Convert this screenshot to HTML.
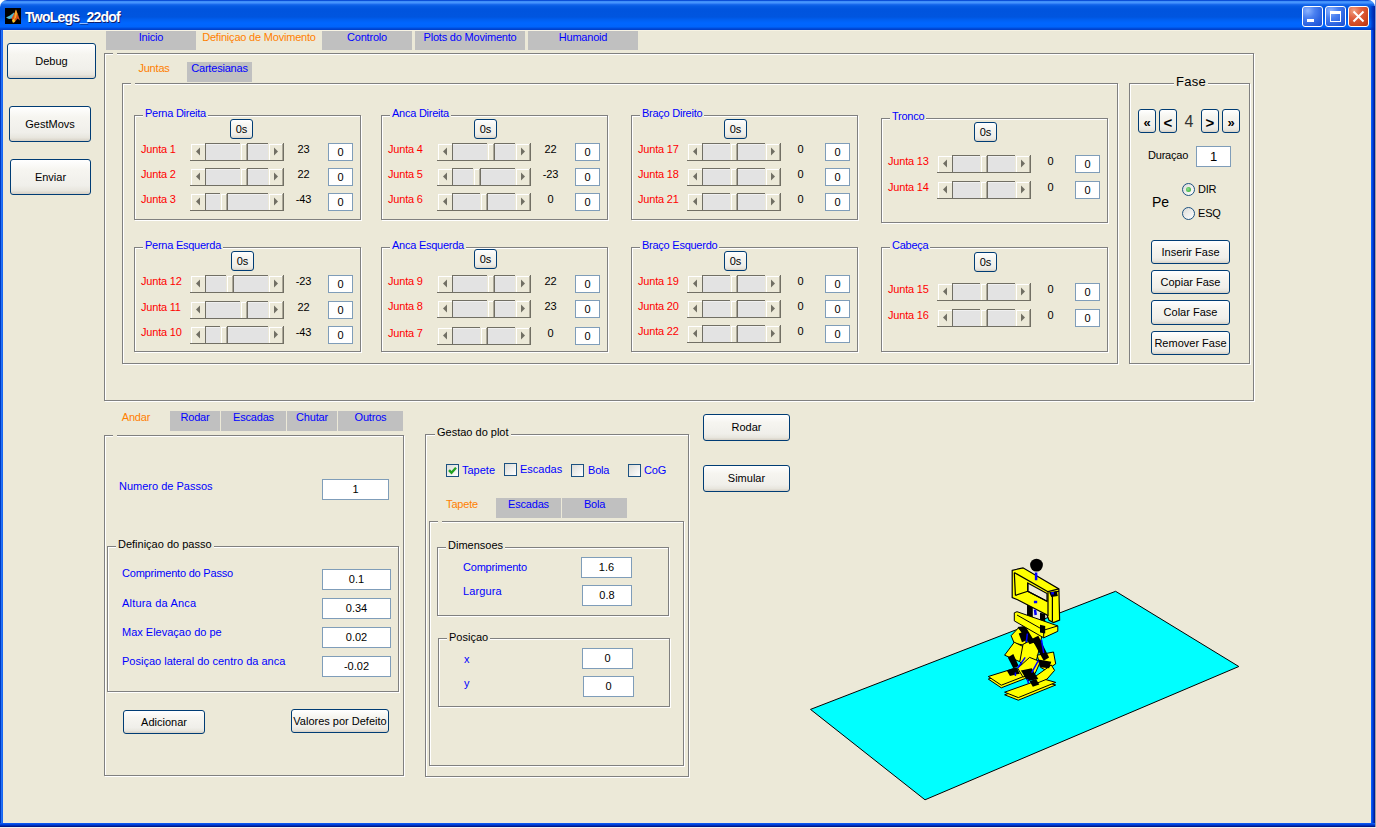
<!DOCTYPE html><html><head><meta charset="utf-8"><title>TwoLegs_22dof</title><style>
*{margin:0;padding:0}
html,body{width:1376px;height:828px;overflow:hidden;background:#fff}
body{position:relative;font-family:'Liberation Sans', sans-serif;font-size:11px}
body>div{position:absolute}
.btn{box-sizing:border-box;border:1px solid #003C74;border-radius:3px;background:linear-gradient(#FFFFFF 0%,#F6F5F0 30%,#F0EFEA 75%,#E8E6DE 90%,#D6D0C5 100%)}
.radio{width:13px;height:13px;box-sizing:border-box;border:1px solid #1C5180;border-radius:50%;background:linear-gradient(135deg,#DCDCD7,#FFFFFF)}
.radio.on::after{content:"";position:absolute;left:3px;top:3px;width:5px;height:5px;border-radius:50%;background:radial-gradient(circle at 40% 40%,#8FE08F,#21A121)}
.cb{width:13px;height:13px;box-sizing:border-box;border:1px solid #1C5180;background:linear-gradient(135deg,#DCDCD7,#FFFFFF)}
</style></head><body><div style="left:0;top:0;width:1376px;height:828px;background:#fff"></div>
<div style="left:1375px;top:0;width:1px;height:30px;background:#7A96D8"></div>
<div id="title" style="left:0;top:0;width:1375px;height:30px;border-radius:7px 7px 0 0;background:linear-gradient(#0B4FD8 0px,#0B4FD8 1px,#3D8CF7 1px,#4A98FF 3px,#1E6EF0 4px,#065CE3 6px,#0054DE 9px,#0055DF 17px,#0060F2 20px,#0066FF 23px,#0064FB 27px,#0050E0 28px,#003CC4 30px)"></div>
<div style="left:1370px;top:6px;width:5px;height:24px;background:linear-gradient(90deg,rgba(0,40,180,0) 0,rgba(0,40,180,.6) 2px,#0020A0 5px)"></div>
<div style="left:0;top:30px;width:3px;height:797px;background:linear-gradient(90deg,#0038C0 0,#0038C0 1px,#2A78F8 1px,#1060F0 3px)"></div>
<div style="left:1371px;top:30px;width:4px;height:797px;background:linear-gradient(90deg,#0A5AF8 0,#0A5AF8 1px,#0046E0 1px,#0046E0 2px,#0030C0 2px,#0030C0 3px,#001C98 3px)"></div>
<div style="left:0;top:823px;width:1375px;height:4px;background:linear-gradient(#0A55F0 0,#0A55F0 1px,#0044DC 1px,#0044DC 2px,#002EB8 2px,#002EB8 3px,#001888 3px)"></div>
<div style="left:1375px;top:30px;width:1px;height:798px;background:#A0A0A0"></div>
<div style="left:0;top:827px;width:1376px;height:1px;background:#F0F0F0"></div>
<div style="left:3px;top:30px;width:1368px;height:793px;background:#ECE9D8"></div>
<div style="left:3px;top:30px;width:1368px;height:1px;background:#F7F3E3"></div>
<svg style="position:absolute;left:5px;top:8px" width="16" height="16" viewBox="0 0 16 16">
<rect width="16" height="16" fill="#000"/>
<polygon points="1,9.5 5,7.5 9,4.5 10,6.5 7,10.5 4,11" fill="#4FB8D0"/>
<polygon points="6.5,10.5 10,4 11,1.5 13,6.5 15,12.5 12.5,10.5 9.5,14.5 7.5,12.5" fill="#D8501A"/>
<polygon points="10,4 11,1.5 12.2,5.5 11,9.5 9,12" fill="#F2A82A"/>
<polygon points="7,12.5 9,10.5 10,13.5 8,15" fill="#F8D030"/>
</svg>
<div style="left:26px;top:10px;font-size:14px;line-height:17px;letter-spacing:-0.75px;font-weight:bold;color:#0F1E6A;white-space:pre">TwoLegs_22dof</div>
<div style="left:25px;top:9px;font-size:14px;line-height:17px;letter-spacing:-0.75px;font-weight:bold;color:#fff;white-space:pre">TwoLegs_22dof</div>
<div style="left:1302px;top:6px;width:21px;height:21px;box-sizing:border-box;border:1px solid #fff;border-radius:3px;background:radial-gradient(circle at 25% 20%, #8CB4FF 0, #4A80F0 35%, #2A62E0 70%, #1A4ED0 100%)"></div>
<div style="left:1325px;top:6px;width:21px;height:21px;box-sizing:border-box;border:1px solid #fff;border-radius:3px;background:radial-gradient(circle at 25% 20%, #8CB4FF 0, #4A80F0 35%, #2A62E0 70%, #1A4ED0 100%)"></div>
<div style="left:1348px;top:6px;width:21px;height:21px;box-sizing:border-box;border:1px solid #fff;border-radius:3px;background:radial-gradient(circle at 25% 20%, #F0A080 0, #E06040 35%, #D04820 70%, #B83010 100%)"></div>
<div style="left:1307px;top:19px;width:7px;height:3px;background:#fff"></div>
<div style="left:1330px;top:11px;width:11px;height:11px;box-sizing:border-box;border:1px solid #fff;border-top-width:3px"></div>
<svg style="position:absolute;left:1348px;top:6px" width="21" height="21"><path d="M5.5 5.5 L15.5 15.5 M15.5 5.5 L5.5 15.5" stroke="#fff" stroke-width="2" /></svg>
<div class="btn" style="left:7px;top:43px;width:89px;height:36px"></div>
<div style="left:-48.5px;top:55px;width:200px;text-align:center;font-size:11px;line-height:13px;color:#000;white-space:pre;letter-spacing:0px;">Debug</div>
<div class="btn" style="left:9px;top:106px;width:82px;height:36px"></div>
<div style="left:-50.0px;top:118px;width:200px;text-align:center;font-size:11px;line-height:13px;color:#000;white-space:pre;letter-spacing:0px;">GestMovs</div>
<div class="btn" style="left:10px;top:159px;width:81px;height:36px"></div>
<div style="left:-49.5px;top:171px;width:200px;text-align:center;font-size:11px;line-height:13px;color:#000;white-space:pre;letter-spacing:0px;">Enviar</div>
<div style="left:106px;top:31px;width:90px;height:19px;background:#C0C0C0"></div>
<div style="left:51.0px;top:31px;width:200px;text-align:center;font-size:11px;line-height:13px;color:#0000FF;white-space:pre;letter-spacing:-0.2px;">Inicio</div>
<div style="left:159px;top:31px;width:200px;text-align:center;font-size:11px;line-height:13px;color:#FF8000;white-space:pre;letter-spacing:-0.2px;">Definiçao de Movimento</div>
<div style="left:322px;top:31px;width:90px;height:19px;background:#C0C0C0"></div>
<div style="left:267.0px;top:31px;width:200px;text-align:center;font-size:11px;line-height:13px;color:#0000FF;white-space:pre;letter-spacing:-0.2px;">Controlo</div>
<div style="left:415px;top:31px;width:110px;height:19px;background:#C0C0C0"></div>
<div style="left:370.0px;top:31px;width:200px;text-align:center;font-size:11px;line-height:13px;color:#0000FF;white-space:pre;letter-spacing:-0.2px;">Plots do Movimento</div>
<div style="left:528px;top:31px;width:110px;height:19px;background:#C0C0C0"></div>
<div style="left:483.0px;top:31px;width:200px;text-align:center;font-size:11px;line-height:13px;color:#0000FF;white-space:pre;letter-spacing:-0.2px;">Humanoid</div>
<div style="left:105px;top:54px;width:1150px;height:348px;border:1px solid #fff;box-sizing:border-box"></div>
<div style="left:104px;top:53px;width:1150px;height:348px;border:1px solid #808080;box-sizing:border-box"></div>
<div style="left:113px;top:53px;width:4px;height:2px;background:#ECE9D8"></div>
<div style="left:54px;top:62px;width:200px;text-align:center;font-size:11px;line-height:13px;color:#FF8000;white-space:pre;letter-spacing:-0.2px;">Juntas</div>
<div style="left:187px;top:62px;width:65px;height:20px;background:#C0C0C0"></div>
<div style="left:119.5px;top:62px;width:200px;text-align:center;font-size:11px;line-height:13px;color:#0000FF;white-space:pre;letter-spacing:-0.2px;">Cartesianas</div>
<div style="left:123px;top:84px;width:996px;height:281px;border:1px solid #fff;box-sizing:border-box"></div>
<div style="left:122px;top:83px;width:996px;height:281px;border:1px solid #808080;box-sizing:border-box"></div>
<div style="left:131px;top:83px;width:4px;height:2px;background:#ECE9D8"></div>
<div style="left:135px;top:116px;width:227px;height:105px;border:1px solid #fff;box-sizing:border-box"></div>
<div style="left:134px;top:115px;width:227px;height:105px;border:1px solid #808080;box-sizing:border-box"></div>
<div style="left:143px;top:107px;padding:0 2px;background:#ECE9D8;font-size:11px;line-height:13px;color:#0000FF;white-space:pre;letter-spacing:-0.25px">Perna Direita</div>
<div class="btn" style="left:230px;top:119px;width:23px;height:20px"></div>
<div style="left:141.5px;top:123px;width:200px;text-align:center;font-size:11px;line-height:13px;color:#000;white-space:pre;letter-spacing:0px;">0s</div>
<div style="left:141px;top:143px;font-size:11px;line-height:13px;color:#FF0000;white-space:pre;letter-spacing:-0.2px;">Junta 1</div>
<div style="left:206px;top:143px;width:62px;height:18px;background:#E3E3E3;border-top:1px solid #716F64;border-bottom:1px solid #716F64;box-sizing:border-box"></div>
<div style="left:206px;top:144px;width:62px;height:1px;background:#F0F0F0"></div>
<div style="left:190px;top:143px;width:16px;height:18px;background:#ECE9D8;border-right:1px solid #716F64;border-bottom:1px solid #716F64;box-sizing:border-box"></div>
<div style="left:191px;top:144px;width:14px;height:16px;border-left:1px solid #fff;border-top:1px solid #fff;box-sizing:border-box"></div>
<svg style="position:absolute;left:190px;top:143px" width="16" height="18"><path d="M6 8.5 L10 4.5 L10 12.5 Z" fill="#716F64"/></svg>
<div style="left:268px;top:143px;width:16px;height:18px;background:#ECE9D8;border-right:1px solid #716F64;border-bottom:1px solid #716F64;box-sizing:border-box"></div>
<div style="left:269px;top:144px;width:14px;height:16px;border-left:1px solid #fff;border-top:1px solid #fff;box-sizing:border-box"></div>
<div style="left:282px;top:144px;width:1px;height:16px;background:#ACA899"></div>
<svg style="position:absolute;left:268px;top:143px" width="16" height="18"><path d="M10 8.5 L6 4.5 L6 12.5 Z" fill="#716F64"/></svg>
<div style="left:240px;top:143px;width:8px;height:18px;background:#ECE9D8;border-right:1px solid #716F64;border-bottom:1px solid #716F64;box-sizing:border-box"></div>
<div style="left:241px;top:144px;width:6px;height:16px;border-left:1px solid #fff;border-top:1px solid #fff;box-sizing:border-box"></div>
<div style="left:246px;top:144px;width:1px;height:16px;background:#ACA899"></div>
<div style="left:203.5px;top:143px;width:200px;text-align:center;font-size:11px;line-height:13px;color:#000;white-space:pre;letter-spacing:-0.2px;">23</div>
<div style="left:328px;top:143px;width:25px;height:18px;background:#fff;border:1px solid #7F9DB9;box-sizing:border-box"></div>
<div style="left:240.5px;top:146px;width:200px;text-align:center;font-size:11px;line-height:13px;color:#000;white-space:pre;letter-spacing:0px;">0</div>
<div style="left:141px;top:168px;font-size:11px;line-height:13px;color:#FF0000;white-space:pre;letter-spacing:-0.2px;">Junta 2</div>
<div style="left:206px;top:168px;width:62px;height:18px;background:#E3E3E3;border-top:1px solid #716F64;border-bottom:1px solid #716F64;box-sizing:border-box"></div>
<div style="left:206px;top:169px;width:62px;height:1px;background:#F0F0F0"></div>
<div style="left:190px;top:168px;width:16px;height:18px;background:#ECE9D8;border-right:1px solid #716F64;border-bottom:1px solid #716F64;box-sizing:border-box"></div>
<div style="left:191px;top:169px;width:14px;height:16px;border-left:1px solid #fff;border-top:1px solid #fff;box-sizing:border-box"></div>
<svg style="position:absolute;left:190px;top:168px" width="16" height="18"><path d="M6 8.5 L10 4.5 L10 12.5 Z" fill="#716F64"/></svg>
<div style="left:268px;top:168px;width:16px;height:18px;background:#ECE9D8;border-right:1px solid #716F64;border-bottom:1px solid #716F64;box-sizing:border-box"></div>
<div style="left:269px;top:169px;width:14px;height:16px;border-left:1px solid #fff;border-top:1px solid #fff;box-sizing:border-box"></div>
<div style="left:282px;top:169px;width:1px;height:16px;background:#ACA899"></div>
<svg style="position:absolute;left:268px;top:168px" width="16" height="18"><path d="M10 8.5 L6 4.5 L6 12.5 Z" fill="#716F64"/></svg>
<div style="left:240px;top:168px;width:8px;height:18px;background:#ECE9D8;border-right:1px solid #716F64;border-bottom:1px solid #716F64;box-sizing:border-box"></div>
<div style="left:241px;top:169px;width:6px;height:16px;border-left:1px solid #fff;border-top:1px solid #fff;box-sizing:border-box"></div>
<div style="left:246px;top:169px;width:1px;height:16px;background:#ACA899"></div>
<div style="left:203.5px;top:168px;width:200px;text-align:center;font-size:11px;line-height:13px;color:#000;white-space:pre;letter-spacing:-0.2px;">22</div>
<div style="left:328px;top:168px;width:25px;height:18px;background:#fff;border:1px solid #7F9DB9;box-sizing:border-box"></div>
<div style="left:240.5px;top:171px;width:200px;text-align:center;font-size:11px;line-height:13px;color:#000;white-space:pre;letter-spacing:0px;">0</div>
<div style="left:141px;top:193px;font-size:11px;line-height:13px;color:#FF0000;white-space:pre;letter-spacing:-0.2px;">Junta 3</div>
<div style="left:206px;top:193px;width:62px;height:18px;background:#E3E3E3;border-top:1px solid #716F64;border-bottom:1px solid #716F64;box-sizing:border-box"></div>
<div style="left:206px;top:194px;width:62px;height:1px;background:#F0F0F0"></div>
<div style="left:190px;top:193px;width:16px;height:18px;background:#ECE9D8;border-right:1px solid #716F64;border-bottom:1px solid #716F64;box-sizing:border-box"></div>
<div style="left:191px;top:194px;width:14px;height:16px;border-left:1px solid #fff;border-top:1px solid #fff;box-sizing:border-box"></div>
<svg style="position:absolute;left:190px;top:193px" width="16" height="18"><path d="M6 8.5 L10 4.5 L10 12.5 Z" fill="#716F64"/></svg>
<div style="left:268px;top:193px;width:16px;height:18px;background:#ECE9D8;border-right:1px solid #716F64;border-bottom:1px solid #716F64;box-sizing:border-box"></div>
<div style="left:269px;top:194px;width:14px;height:16px;border-left:1px solid #fff;border-top:1px solid #fff;box-sizing:border-box"></div>
<div style="left:282px;top:194px;width:1px;height:16px;background:#ACA899"></div>
<svg style="position:absolute;left:268px;top:193px" width="16" height="18"><path d="M10 8.5 L6 4.5 L6 12.5 Z" fill="#716F64"/></svg>
<div style="left:220px;top:193px;width:8px;height:18px;background:#ECE9D8;border-right:1px solid #716F64;border-bottom:1px solid #716F64;box-sizing:border-box"></div>
<div style="left:221px;top:194px;width:6px;height:16px;border-left:1px solid #fff;border-top:1px solid #fff;box-sizing:border-box"></div>
<div style="left:226px;top:194px;width:1px;height:16px;background:#ACA899"></div>
<div style="left:203.5px;top:193px;width:200px;text-align:center;font-size:11px;line-height:13px;color:#000;white-space:pre;letter-spacing:-0.2px;">-43</div>
<div style="left:328px;top:193px;width:25px;height:18px;background:#fff;border:1px solid #7F9DB9;box-sizing:border-box"></div>
<div style="left:240.5px;top:196px;width:200px;text-align:center;font-size:11px;line-height:13px;color:#000;white-space:pre;letter-spacing:0px;">0</div>
<div style="left:382px;top:116px;width:227px;height:105px;border:1px solid #fff;box-sizing:border-box"></div>
<div style="left:381px;top:115px;width:227px;height:105px;border:1px solid #808080;box-sizing:border-box"></div>
<div style="left:390px;top:107px;padding:0 2px;background:#ECE9D8;font-size:11px;line-height:13px;color:#0000FF;white-space:pre;letter-spacing:-0.25px">Anca Direita</div>
<div class="btn" style="left:474px;top:119px;width:23px;height:20px"></div>
<div style="left:385.5px;top:123px;width:200px;text-align:center;font-size:11px;line-height:13px;color:#000;white-space:pre;letter-spacing:0px;">0s</div>
<div style="left:388px;top:143px;font-size:11px;line-height:13px;color:#FF0000;white-space:pre;letter-spacing:-0.2px;">Junta 4</div>
<div style="left:453px;top:143px;width:62px;height:18px;background:#E3E3E3;border-top:1px solid #716F64;border-bottom:1px solid #716F64;box-sizing:border-box"></div>
<div style="left:453px;top:144px;width:62px;height:1px;background:#F0F0F0"></div>
<div style="left:437px;top:143px;width:16px;height:18px;background:#ECE9D8;border-right:1px solid #716F64;border-bottom:1px solid #716F64;box-sizing:border-box"></div>
<div style="left:438px;top:144px;width:14px;height:16px;border-left:1px solid #fff;border-top:1px solid #fff;box-sizing:border-box"></div>
<svg style="position:absolute;left:437px;top:143px" width="16" height="18"><path d="M6 8.5 L10 4.5 L10 12.5 Z" fill="#716F64"/></svg>
<div style="left:515px;top:143px;width:16px;height:18px;background:#ECE9D8;border-right:1px solid #716F64;border-bottom:1px solid #716F64;box-sizing:border-box"></div>
<div style="left:516px;top:144px;width:14px;height:16px;border-left:1px solid #fff;border-top:1px solid #fff;box-sizing:border-box"></div>
<div style="left:529px;top:144px;width:1px;height:16px;background:#ACA899"></div>
<svg style="position:absolute;left:515px;top:143px" width="16" height="18"><path d="M10 8.5 L6 4.5 L6 12.5 Z" fill="#716F64"/></svg>
<div style="left:487px;top:143px;width:8px;height:18px;background:#ECE9D8;border-right:1px solid #716F64;border-bottom:1px solid #716F64;box-sizing:border-box"></div>
<div style="left:488px;top:144px;width:6px;height:16px;border-left:1px solid #fff;border-top:1px solid #fff;box-sizing:border-box"></div>
<div style="left:493px;top:144px;width:1px;height:16px;background:#ACA899"></div>
<div style="left:450.5px;top:143px;width:200px;text-align:center;font-size:11px;line-height:13px;color:#000;white-space:pre;letter-spacing:-0.2px;">22</div>
<div style="left:575px;top:143px;width:25px;height:18px;background:#fff;border:1px solid #7F9DB9;box-sizing:border-box"></div>
<div style="left:487.5px;top:146px;width:200px;text-align:center;font-size:11px;line-height:13px;color:#000;white-space:pre;letter-spacing:0px;">0</div>
<div style="left:388px;top:168px;font-size:11px;line-height:13px;color:#FF0000;white-space:pre;letter-spacing:-0.2px;">Junta 5</div>
<div style="left:453px;top:168px;width:62px;height:18px;background:#E3E3E3;border-top:1px solid #716F64;border-bottom:1px solid #716F64;box-sizing:border-box"></div>
<div style="left:453px;top:169px;width:62px;height:1px;background:#F0F0F0"></div>
<div style="left:437px;top:168px;width:16px;height:18px;background:#ECE9D8;border-right:1px solid #716F64;border-bottom:1px solid #716F64;box-sizing:border-box"></div>
<div style="left:438px;top:169px;width:14px;height:16px;border-left:1px solid #fff;border-top:1px solid #fff;box-sizing:border-box"></div>
<svg style="position:absolute;left:437px;top:168px" width="16" height="18"><path d="M6 8.5 L10 4.5 L10 12.5 Z" fill="#716F64"/></svg>
<div style="left:515px;top:168px;width:16px;height:18px;background:#ECE9D8;border-right:1px solid #716F64;border-bottom:1px solid #716F64;box-sizing:border-box"></div>
<div style="left:516px;top:169px;width:14px;height:16px;border-left:1px solid #fff;border-top:1px solid #fff;box-sizing:border-box"></div>
<div style="left:529px;top:169px;width:1px;height:16px;background:#ACA899"></div>
<svg style="position:absolute;left:515px;top:168px" width="16" height="18"><path d="M10 8.5 L6 4.5 L6 12.5 Z" fill="#716F64"/></svg>
<div style="left:473px;top:168px;width:8px;height:18px;background:#ECE9D8;border-right:1px solid #716F64;border-bottom:1px solid #716F64;box-sizing:border-box"></div>
<div style="left:474px;top:169px;width:6px;height:16px;border-left:1px solid #fff;border-top:1px solid #fff;box-sizing:border-box"></div>
<div style="left:479px;top:169px;width:1px;height:16px;background:#ACA899"></div>
<div style="left:450.5px;top:168px;width:200px;text-align:center;font-size:11px;line-height:13px;color:#000;white-space:pre;letter-spacing:-0.2px;">-23</div>
<div style="left:575px;top:168px;width:25px;height:18px;background:#fff;border:1px solid #7F9DB9;box-sizing:border-box"></div>
<div style="left:487.5px;top:171px;width:200px;text-align:center;font-size:11px;line-height:13px;color:#000;white-space:pre;letter-spacing:0px;">0</div>
<div style="left:388px;top:193px;font-size:11px;line-height:13px;color:#FF0000;white-space:pre;letter-spacing:-0.2px;">Junta 6</div>
<div style="left:453px;top:193px;width:62px;height:18px;background:#E3E3E3;border-top:1px solid #716F64;border-bottom:1px solid #716F64;box-sizing:border-box"></div>
<div style="left:453px;top:194px;width:62px;height:1px;background:#F0F0F0"></div>
<div style="left:437px;top:193px;width:16px;height:18px;background:#ECE9D8;border-right:1px solid #716F64;border-bottom:1px solid #716F64;box-sizing:border-box"></div>
<div style="left:438px;top:194px;width:14px;height:16px;border-left:1px solid #fff;border-top:1px solid #fff;box-sizing:border-box"></div>
<svg style="position:absolute;left:437px;top:193px" width="16" height="18"><path d="M6 8.5 L10 4.5 L10 12.5 Z" fill="#716F64"/></svg>
<div style="left:515px;top:193px;width:16px;height:18px;background:#ECE9D8;border-right:1px solid #716F64;border-bottom:1px solid #716F64;box-sizing:border-box"></div>
<div style="left:516px;top:194px;width:14px;height:16px;border-left:1px solid #fff;border-top:1px solid #fff;box-sizing:border-box"></div>
<div style="left:529px;top:194px;width:1px;height:16px;background:#ACA899"></div>
<svg style="position:absolute;left:515px;top:193px" width="16" height="18"><path d="M10 8.5 L6 4.5 L6 12.5 Z" fill="#716F64"/></svg>
<div style="left:480px;top:193px;width:8px;height:18px;background:#ECE9D8;border-right:1px solid #716F64;border-bottom:1px solid #716F64;box-sizing:border-box"></div>
<div style="left:481px;top:194px;width:6px;height:16px;border-left:1px solid #fff;border-top:1px solid #fff;box-sizing:border-box"></div>
<div style="left:486px;top:194px;width:1px;height:16px;background:#ACA899"></div>
<div style="left:450.5px;top:193px;width:200px;text-align:center;font-size:11px;line-height:13px;color:#000;white-space:pre;letter-spacing:-0.2px;">0</div>
<div style="left:575px;top:193px;width:25px;height:18px;background:#fff;border:1px solid #7F9DB9;box-sizing:border-box"></div>
<div style="left:487.5px;top:196px;width:200px;text-align:center;font-size:11px;line-height:13px;color:#000;white-space:pre;letter-spacing:0px;">0</div>
<div style="left:632px;top:116px;width:227px;height:105px;border:1px solid #fff;box-sizing:border-box"></div>
<div style="left:631px;top:115px;width:227px;height:105px;border:1px solid #808080;box-sizing:border-box"></div>
<div style="left:640px;top:107px;padding:0 2px;background:#ECE9D8;font-size:11px;line-height:13px;color:#0000FF;white-space:pre;letter-spacing:-0.25px">Braço Direito</div>
<div class="btn" style="left:724px;top:119px;width:23px;height:20px"></div>
<div style="left:635.5px;top:123px;width:200px;text-align:center;font-size:11px;line-height:13px;color:#000;white-space:pre;letter-spacing:0px;">0s</div>
<div style="left:638px;top:143px;font-size:11px;line-height:13px;color:#FF0000;white-space:pre;letter-spacing:-0.2px;">Junta 17</div>
<div style="left:703px;top:143px;width:62px;height:18px;background:#E3E3E3;border-top:1px solid #716F64;border-bottom:1px solid #716F64;box-sizing:border-box"></div>
<div style="left:703px;top:144px;width:62px;height:1px;background:#F0F0F0"></div>
<div style="left:687px;top:143px;width:16px;height:18px;background:#ECE9D8;border-right:1px solid #716F64;border-bottom:1px solid #716F64;box-sizing:border-box"></div>
<div style="left:688px;top:144px;width:14px;height:16px;border-left:1px solid #fff;border-top:1px solid #fff;box-sizing:border-box"></div>
<svg style="position:absolute;left:687px;top:143px" width="16" height="18"><path d="M6 8.5 L10 4.5 L10 12.5 Z" fill="#716F64"/></svg>
<div style="left:765px;top:143px;width:16px;height:18px;background:#ECE9D8;border-right:1px solid #716F64;border-bottom:1px solid #716F64;box-sizing:border-box"></div>
<div style="left:766px;top:144px;width:14px;height:16px;border-left:1px solid #fff;border-top:1px solid #fff;box-sizing:border-box"></div>
<div style="left:779px;top:144px;width:1px;height:16px;background:#ACA899"></div>
<svg style="position:absolute;left:765px;top:143px" width="16" height="18"><path d="M10 8.5 L6 4.5 L6 12.5 Z" fill="#716F64"/></svg>
<div style="left:730px;top:143px;width:8px;height:18px;background:#ECE9D8;border-right:1px solid #716F64;border-bottom:1px solid #716F64;box-sizing:border-box"></div>
<div style="left:731px;top:144px;width:6px;height:16px;border-left:1px solid #fff;border-top:1px solid #fff;box-sizing:border-box"></div>
<div style="left:736px;top:144px;width:1px;height:16px;background:#ACA899"></div>
<div style="left:700.5px;top:143px;width:200px;text-align:center;font-size:11px;line-height:13px;color:#000;white-space:pre;letter-spacing:-0.2px;">0</div>
<div style="left:825px;top:143px;width:25px;height:18px;background:#fff;border:1px solid #7F9DB9;box-sizing:border-box"></div>
<div style="left:737.5px;top:146px;width:200px;text-align:center;font-size:11px;line-height:13px;color:#000;white-space:pre;letter-spacing:0px;">0</div>
<div style="left:638px;top:168px;font-size:11px;line-height:13px;color:#FF0000;white-space:pre;letter-spacing:-0.2px;">Junta 18</div>
<div style="left:703px;top:168px;width:62px;height:18px;background:#E3E3E3;border-top:1px solid #716F64;border-bottom:1px solid #716F64;box-sizing:border-box"></div>
<div style="left:703px;top:169px;width:62px;height:1px;background:#F0F0F0"></div>
<div style="left:687px;top:168px;width:16px;height:18px;background:#ECE9D8;border-right:1px solid #716F64;border-bottom:1px solid #716F64;box-sizing:border-box"></div>
<div style="left:688px;top:169px;width:14px;height:16px;border-left:1px solid #fff;border-top:1px solid #fff;box-sizing:border-box"></div>
<svg style="position:absolute;left:687px;top:168px" width="16" height="18"><path d="M6 8.5 L10 4.5 L10 12.5 Z" fill="#716F64"/></svg>
<div style="left:765px;top:168px;width:16px;height:18px;background:#ECE9D8;border-right:1px solid #716F64;border-bottom:1px solid #716F64;box-sizing:border-box"></div>
<div style="left:766px;top:169px;width:14px;height:16px;border-left:1px solid #fff;border-top:1px solid #fff;box-sizing:border-box"></div>
<div style="left:779px;top:169px;width:1px;height:16px;background:#ACA899"></div>
<svg style="position:absolute;left:765px;top:168px" width="16" height="18"><path d="M10 8.5 L6 4.5 L6 12.5 Z" fill="#716F64"/></svg>
<div style="left:730px;top:168px;width:8px;height:18px;background:#ECE9D8;border-right:1px solid #716F64;border-bottom:1px solid #716F64;box-sizing:border-box"></div>
<div style="left:731px;top:169px;width:6px;height:16px;border-left:1px solid #fff;border-top:1px solid #fff;box-sizing:border-box"></div>
<div style="left:736px;top:169px;width:1px;height:16px;background:#ACA899"></div>
<div style="left:700.5px;top:168px;width:200px;text-align:center;font-size:11px;line-height:13px;color:#000;white-space:pre;letter-spacing:-0.2px;">0</div>
<div style="left:825px;top:168px;width:25px;height:18px;background:#fff;border:1px solid #7F9DB9;box-sizing:border-box"></div>
<div style="left:737.5px;top:171px;width:200px;text-align:center;font-size:11px;line-height:13px;color:#000;white-space:pre;letter-spacing:0px;">0</div>
<div style="left:638px;top:193px;font-size:11px;line-height:13px;color:#FF0000;white-space:pre;letter-spacing:-0.2px;">Junta 21</div>
<div style="left:703px;top:193px;width:62px;height:18px;background:#E3E3E3;border-top:1px solid #716F64;border-bottom:1px solid #716F64;box-sizing:border-box"></div>
<div style="left:703px;top:194px;width:62px;height:1px;background:#F0F0F0"></div>
<div style="left:687px;top:193px;width:16px;height:18px;background:#ECE9D8;border-right:1px solid #716F64;border-bottom:1px solid #716F64;box-sizing:border-box"></div>
<div style="left:688px;top:194px;width:14px;height:16px;border-left:1px solid #fff;border-top:1px solid #fff;box-sizing:border-box"></div>
<svg style="position:absolute;left:687px;top:193px" width="16" height="18"><path d="M6 8.5 L10 4.5 L10 12.5 Z" fill="#716F64"/></svg>
<div style="left:765px;top:193px;width:16px;height:18px;background:#ECE9D8;border-right:1px solid #716F64;border-bottom:1px solid #716F64;box-sizing:border-box"></div>
<div style="left:766px;top:194px;width:14px;height:16px;border-left:1px solid #fff;border-top:1px solid #fff;box-sizing:border-box"></div>
<div style="left:779px;top:194px;width:1px;height:16px;background:#ACA899"></div>
<svg style="position:absolute;left:765px;top:193px" width="16" height="18"><path d="M10 8.5 L6 4.5 L6 12.5 Z" fill="#716F64"/></svg>
<div style="left:730px;top:193px;width:8px;height:18px;background:#ECE9D8;border-right:1px solid #716F64;border-bottom:1px solid #716F64;box-sizing:border-box"></div>
<div style="left:731px;top:194px;width:6px;height:16px;border-left:1px solid #fff;border-top:1px solid #fff;box-sizing:border-box"></div>
<div style="left:736px;top:194px;width:1px;height:16px;background:#ACA899"></div>
<div style="left:700.5px;top:193px;width:200px;text-align:center;font-size:11px;line-height:13px;color:#000;white-space:pre;letter-spacing:-0.2px;">0</div>
<div style="left:825px;top:193px;width:25px;height:18px;background:#fff;border:1px solid #7F9DB9;box-sizing:border-box"></div>
<div style="left:737.5px;top:196px;width:200px;text-align:center;font-size:11px;line-height:13px;color:#000;white-space:pre;letter-spacing:0px;">0</div>
<div style="left:882px;top:119px;width:227px;height:105px;border:1px solid #fff;box-sizing:border-box"></div>
<div style="left:881px;top:118px;width:227px;height:105px;border:1px solid #808080;box-sizing:border-box"></div>
<div style="left:890px;top:110px;padding:0 2px;background:#ECE9D8;font-size:11px;line-height:13px;color:#0000FF;white-space:pre;letter-spacing:-0.25px">Tronco</div>
<div class="btn" style="left:974px;top:122px;width:23px;height:20px"></div>
<div style="left:885.5px;top:126px;width:200px;text-align:center;font-size:11px;line-height:13px;color:#000;white-space:pre;letter-spacing:0px;">0s</div>
<div style="left:888px;top:155px;font-size:11px;line-height:13px;color:#FF0000;white-space:pre;letter-spacing:-0.2px;">Junta 13</div>
<div style="left:953px;top:155px;width:62px;height:18px;background:#E3E3E3;border-top:1px solid #716F64;border-bottom:1px solid #716F64;box-sizing:border-box"></div>
<div style="left:953px;top:156px;width:62px;height:1px;background:#F0F0F0"></div>
<div style="left:937px;top:155px;width:16px;height:18px;background:#ECE9D8;border-right:1px solid #716F64;border-bottom:1px solid #716F64;box-sizing:border-box"></div>
<div style="left:938px;top:156px;width:14px;height:16px;border-left:1px solid #fff;border-top:1px solid #fff;box-sizing:border-box"></div>
<svg style="position:absolute;left:937px;top:155px" width="16" height="18"><path d="M6 8.5 L10 4.5 L10 12.5 Z" fill="#716F64"/></svg>
<div style="left:1015px;top:155px;width:16px;height:18px;background:#ECE9D8;border-right:1px solid #716F64;border-bottom:1px solid #716F64;box-sizing:border-box"></div>
<div style="left:1016px;top:156px;width:14px;height:16px;border-left:1px solid #fff;border-top:1px solid #fff;box-sizing:border-box"></div>
<div style="left:1029px;top:156px;width:1px;height:16px;background:#ACA899"></div>
<svg style="position:absolute;left:1015px;top:155px" width="16" height="18"><path d="M10 8.5 L6 4.5 L6 12.5 Z" fill="#716F64"/></svg>
<div style="left:980px;top:155px;width:8px;height:18px;background:#ECE9D8;border-right:1px solid #716F64;border-bottom:1px solid #716F64;box-sizing:border-box"></div>
<div style="left:981px;top:156px;width:6px;height:16px;border-left:1px solid #fff;border-top:1px solid #fff;box-sizing:border-box"></div>
<div style="left:986px;top:156px;width:1px;height:16px;background:#ACA899"></div>
<div style="left:950.5px;top:155px;width:200px;text-align:center;font-size:11px;line-height:13px;color:#000;white-space:pre;letter-spacing:-0.2px;">0</div>
<div style="left:1075px;top:155px;width:25px;height:18px;background:#fff;border:1px solid #7F9DB9;box-sizing:border-box"></div>
<div style="left:987.5px;top:158px;width:200px;text-align:center;font-size:11px;line-height:13px;color:#000;white-space:pre;letter-spacing:0px;">0</div>
<div style="left:888px;top:181px;font-size:11px;line-height:13px;color:#FF0000;white-space:pre;letter-spacing:-0.2px;">Junta 14</div>
<div style="left:953px;top:181px;width:62px;height:18px;background:#E3E3E3;border-top:1px solid #716F64;border-bottom:1px solid #716F64;box-sizing:border-box"></div>
<div style="left:953px;top:182px;width:62px;height:1px;background:#F0F0F0"></div>
<div style="left:937px;top:181px;width:16px;height:18px;background:#ECE9D8;border-right:1px solid #716F64;border-bottom:1px solid #716F64;box-sizing:border-box"></div>
<div style="left:938px;top:182px;width:14px;height:16px;border-left:1px solid #fff;border-top:1px solid #fff;box-sizing:border-box"></div>
<svg style="position:absolute;left:937px;top:181px" width="16" height="18"><path d="M6 8.5 L10 4.5 L10 12.5 Z" fill="#716F64"/></svg>
<div style="left:1015px;top:181px;width:16px;height:18px;background:#ECE9D8;border-right:1px solid #716F64;border-bottom:1px solid #716F64;box-sizing:border-box"></div>
<div style="left:1016px;top:182px;width:14px;height:16px;border-left:1px solid #fff;border-top:1px solid #fff;box-sizing:border-box"></div>
<div style="left:1029px;top:182px;width:1px;height:16px;background:#ACA899"></div>
<svg style="position:absolute;left:1015px;top:181px" width="16" height="18"><path d="M10 8.5 L6 4.5 L6 12.5 Z" fill="#716F64"/></svg>
<div style="left:980px;top:181px;width:8px;height:18px;background:#ECE9D8;border-right:1px solid #716F64;border-bottom:1px solid #716F64;box-sizing:border-box"></div>
<div style="left:981px;top:182px;width:6px;height:16px;border-left:1px solid #fff;border-top:1px solid #fff;box-sizing:border-box"></div>
<div style="left:986px;top:182px;width:1px;height:16px;background:#ACA899"></div>
<div style="left:950.5px;top:181px;width:200px;text-align:center;font-size:11px;line-height:13px;color:#000;white-space:pre;letter-spacing:-0.2px;">0</div>
<div style="left:1075px;top:181px;width:25px;height:18px;background:#fff;border:1px solid #7F9DB9;box-sizing:border-box"></div>
<div style="left:987.5px;top:184px;width:200px;text-align:center;font-size:11px;line-height:13px;color:#000;white-space:pre;letter-spacing:0px;">0</div>
<div style="left:135px;top:248px;width:227px;height:105px;border:1px solid #fff;box-sizing:border-box"></div>
<div style="left:134px;top:247px;width:227px;height:105px;border:1px solid #808080;box-sizing:border-box"></div>
<div style="left:143px;top:239px;padding:0 2px;background:#ECE9D8;font-size:11px;line-height:13px;color:#0000FF;white-space:pre;letter-spacing:-0.25px">Perna Esquerda</div>
<div class="btn" style="left:231px;top:251px;width:23px;height:20px"></div>
<div style="left:142.5px;top:255px;width:200px;text-align:center;font-size:11px;line-height:13px;color:#000;white-space:pre;letter-spacing:0px;">0s</div>
<div style="left:141px;top:275px;font-size:11px;line-height:13px;color:#FF0000;white-space:pre;letter-spacing:-0.2px;">Junta 12</div>
<div style="left:206px;top:275px;width:62px;height:18px;background:#E3E3E3;border-top:1px solid #716F64;border-bottom:1px solid #716F64;box-sizing:border-box"></div>
<div style="left:206px;top:276px;width:62px;height:1px;background:#F0F0F0"></div>
<div style="left:190px;top:275px;width:16px;height:18px;background:#ECE9D8;border-right:1px solid #716F64;border-bottom:1px solid #716F64;box-sizing:border-box"></div>
<div style="left:191px;top:276px;width:14px;height:16px;border-left:1px solid #fff;border-top:1px solid #fff;box-sizing:border-box"></div>
<svg style="position:absolute;left:190px;top:275px" width="16" height="18"><path d="M6 8.5 L10 4.5 L10 12.5 Z" fill="#716F64"/></svg>
<div style="left:268px;top:275px;width:16px;height:18px;background:#ECE9D8;border-right:1px solid #716F64;border-bottom:1px solid #716F64;box-sizing:border-box"></div>
<div style="left:269px;top:276px;width:14px;height:16px;border-left:1px solid #fff;border-top:1px solid #fff;box-sizing:border-box"></div>
<div style="left:282px;top:276px;width:1px;height:16px;background:#ACA899"></div>
<svg style="position:absolute;left:268px;top:275px" width="16" height="18"><path d="M10 8.5 L6 4.5 L6 12.5 Z" fill="#716F64"/></svg>
<div style="left:226px;top:275px;width:8px;height:18px;background:#ECE9D8;border-right:1px solid #716F64;border-bottom:1px solid #716F64;box-sizing:border-box"></div>
<div style="left:227px;top:276px;width:6px;height:16px;border-left:1px solid #fff;border-top:1px solid #fff;box-sizing:border-box"></div>
<div style="left:232px;top:276px;width:1px;height:16px;background:#ACA899"></div>
<div style="left:203.5px;top:275px;width:200px;text-align:center;font-size:11px;line-height:13px;color:#000;white-space:pre;letter-spacing:-0.2px;">-23</div>
<div style="left:328px;top:275px;width:25px;height:18px;background:#fff;border:1px solid #7F9DB9;box-sizing:border-box"></div>
<div style="left:240.5px;top:278px;width:200px;text-align:center;font-size:11px;line-height:13px;color:#000;white-space:pre;letter-spacing:0px;">0</div>
<div style="left:141px;top:301px;font-size:11px;line-height:13px;color:#FF0000;white-space:pre;letter-spacing:-0.2px;">Junta 11</div>
<div style="left:206px;top:301px;width:62px;height:18px;background:#E3E3E3;border-top:1px solid #716F64;border-bottom:1px solid #716F64;box-sizing:border-box"></div>
<div style="left:206px;top:302px;width:62px;height:1px;background:#F0F0F0"></div>
<div style="left:190px;top:301px;width:16px;height:18px;background:#ECE9D8;border-right:1px solid #716F64;border-bottom:1px solid #716F64;box-sizing:border-box"></div>
<div style="left:191px;top:302px;width:14px;height:16px;border-left:1px solid #fff;border-top:1px solid #fff;box-sizing:border-box"></div>
<svg style="position:absolute;left:190px;top:301px" width="16" height="18"><path d="M6 8.5 L10 4.5 L10 12.5 Z" fill="#716F64"/></svg>
<div style="left:268px;top:301px;width:16px;height:18px;background:#ECE9D8;border-right:1px solid #716F64;border-bottom:1px solid #716F64;box-sizing:border-box"></div>
<div style="left:269px;top:302px;width:14px;height:16px;border-left:1px solid #fff;border-top:1px solid #fff;box-sizing:border-box"></div>
<div style="left:282px;top:302px;width:1px;height:16px;background:#ACA899"></div>
<svg style="position:absolute;left:268px;top:301px" width="16" height="18"><path d="M10 8.5 L6 4.5 L6 12.5 Z" fill="#716F64"/></svg>
<div style="left:240px;top:301px;width:8px;height:18px;background:#ECE9D8;border-right:1px solid #716F64;border-bottom:1px solid #716F64;box-sizing:border-box"></div>
<div style="left:241px;top:302px;width:6px;height:16px;border-left:1px solid #fff;border-top:1px solid #fff;box-sizing:border-box"></div>
<div style="left:246px;top:302px;width:1px;height:16px;background:#ACA899"></div>
<div style="left:203.5px;top:301px;width:200px;text-align:center;font-size:11px;line-height:13px;color:#000;white-space:pre;letter-spacing:-0.2px;">22</div>
<div style="left:328px;top:301px;width:25px;height:18px;background:#fff;border:1px solid #7F9DB9;box-sizing:border-box"></div>
<div style="left:240.5px;top:304px;width:200px;text-align:center;font-size:11px;line-height:13px;color:#000;white-space:pre;letter-spacing:0px;">0</div>
<div style="left:141px;top:326px;font-size:11px;line-height:13px;color:#FF0000;white-space:pre;letter-spacing:-0.2px;">Junta 10</div>
<div style="left:206px;top:326px;width:62px;height:18px;background:#E3E3E3;border-top:1px solid #716F64;border-bottom:1px solid #716F64;box-sizing:border-box"></div>
<div style="left:206px;top:327px;width:62px;height:1px;background:#F0F0F0"></div>
<div style="left:190px;top:326px;width:16px;height:18px;background:#ECE9D8;border-right:1px solid #716F64;border-bottom:1px solid #716F64;box-sizing:border-box"></div>
<div style="left:191px;top:327px;width:14px;height:16px;border-left:1px solid #fff;border-top:1px solid #fff;box-sizing:border-box"></div>
<svg style="position:absolute;left:190px;top:326px" width="16" height="18"><path d="M6 8.5 L10 4.5 L10 12.5 Z" fill="#716F64"/></svg>
<div style="left:268px;top:326px;width:16px;height:18px;background:#ECE9D8;border-right:1px solid #716F64;border-bottom:1px solid #716F64;box-sizing:border-box"></div>
<div style="left:269px;top:327px;width:14px;height:16px;border-left:1px solid #fff;border-top:1px solid #fff;box-sizing:border-box"></div>
<div style="left:282px;top:327px;width:1px;height:16px;background:#ACA899"></div>
<svg style="position:absolute;left:268px;top:326px" width="16" height="18"><path d="M10 8.5 L6 4.5 L6 12.5 Z" fill="#716F64"/></svg>
<div style="left:220px;top:326px;width:8px;height:18px;background:#ECE9D8;border-right:1px solid #716F64;border-bottom:1px solid #716F64;box-sizing:border-box"></div>
<div style="left:221px;top:327px;width:6px;height:16px;border-left:1px solid #fff;border-top:1px solid #fff;box-sizing:border-box"></div>
<div style="left:226px;top:327px;width:1px;height:16px;background:#ACA899"></div>
<div style="left:203.5px;top:326px;width:200px;text-align:center;font-size:11px;line-height:13px;color:#000;white-space:pre;letter-spacing:-0.2px;">-43</div>
<div style="left:328px;top:326px;width:25px;height:18px;background:#fff;border:1px solid #7F9DB9;box-sizing:border-box"></div>
<div style="left:240.5px;top:329px;width:200px;text-align:center;font-size:11px;line-height:13px;color:#000;white-space:pre;letter-spacing:0px;">0</div>
<div style="left:382px;top:248px;width:227px;height:105px;border:1px solid #fff;box-sizing:border-box"></div>
<div style="left:381px;top:247px;width:227px;height:105px;border:1px solid #808080;box-sizing:border-box"></div>
<div style="left:390px;top:239px;padding:0 2px;background:#ECE9D8;font-size:11px;line-height:13px;color:#0000FF;white-space:pre;letter-spacing:-0.25px">Anca Esquerda</div>
<div class="btn" style="left:474px;top:249px;width:23px;height:20px"></div>
<div style="left:385.5px;top:253px;width:200px;text-align:center;font-size:11px;line-height:13px;color:#000;white-space:pre;letter-spacing:0px;">0s</div>
<div style="left:388px;top:275px;font-size:11px;line-height:13px;color:#FF0000;white-space:pre;letter-spacing:-0.2px;">Junta 9</div>
<div style="left:453px;top:275px;width:62px;height:18px;background:#E3E3E3;border-top:1px solid #716F64;border-bottom:1px solid #716F64;box-sizing:border-box"></div>
<div style="left:453px;top:276px;width:62px;height:1px;background:#F0F0F0"></div>
<div style="left:437px;top:275px;width:16px;height:18px;background:#ECE9D8;border-right:1px solid #716F64;border-bottom:1px solid #716F64;box-sizing:border-box"></div>
<div style="left:438px;top:276px;width:14px;height:16px;border-left:1px solid #fff;border-top:1px solid #fff;box-sizing:border-box"></div>
<svg style="position:absolute;left:437px;top:275px" width="16" height="18"><path d="M6 8.5 L10 4.5 L10 12.5 Z" fill="#716F64"/></svg>
<div style="left:515px;top:275px;width:16px;height:18px;background:#ECE9D8;border-right:1px solid #716F64;border-bottom:1px solid #716F64;box-sizing:border-box"></div>
<div style="left:516px;top:276px;width:14px;height:16px;border-left:1px solid #fff;border-top:1px solid #fff;box-sizing:border-box"></div>
<div style="left:529px;top:276px;width:1px;height:16px;background:#ACA899"></div>
<svg style="position:absolute;left:515px;top:275px" width="16" height="18"><path d="M10 8.5 L6 4.5 L6 12.5 Z" fill="#716F64"/></svg>
<div style="left:487px;top:275px;width:8px;height:18px;background:#ECE9D8;border-right:1px solid #716F64;border-bottom:1px solid #716F64;box-sizing:border-box"></div>
<div style="left:488px;top:276px;width:6px;height:16px;border-left:1px solid #fff;border-top:1px solid #fff;box-sizing:border-box"></div>
<div style="left:493px;top:276px;width:1px;height:16px;background:#ACA899"></div>
<div style="left:450.5px;top:275px;width:200px;text-align:center;font-size:11px;line-height:13px;color:#000;white-space:pre;letter-spacing:-0.2px;">22</div>
<div style="left:575px;top:275px;width:25px;height:18px;background:#fff;border:1px solid #7F9DB9;box-sizing:border-box"></div>
<div style="left:487.5px;top:278px;width:200px;text-align:center;font-size:11px;line-height:13px;color:#000;white-space:pre;letter-spacing:0px;">0</div>
<div style="left:388px;top:300px;font-size:11px;line-height:13px;color:#FF0000;white-space:pre;letter-spacing:-0.2px;">Junta 8</div>
<div style="left:453px;top:300px;width:62px;height:18px;background:#E3E3E3;border-top:1px solid #716F64;border-bottom:1px solid #716F64;box-sizing:border-box"></div>
<div style="left:453px;top:301px;width:62px;height:1px;background:#F0F0F0"></div>
<div style="left:437px;top:300px;width:16px;height:18px;background:#ECE9D8;border-right:1px solid #716F64;border-bottom:1px solid #716F64;box-sizing:border-box"></div>
<div style="left:438px;top:301px;width:14px;height:16px;border-left:1px solid #fff;border-top:1px solid #fff;box-sizing:border-box"></div>
<svg style="position:absolute;left:437px;top:300px" width="16" height="18"><path d="M6 8.5 L10 4.5 L10 12.5 Z" fill="#716F64"/></svg>
<div style="left:515px;top:300px;width:16px;height:18px;background:#ECE9D8;border-right:1px solid #716F64;border-bottom:1px solid #716F64;box-sizing:border-box"></div>
<div style="left:516px;top:301px;width:14px;height:16px;border-left:1px solid #fff;border-top:1px solid #fff;box-sizing:border-box"></div>
<div style="left:529px;top:301px;width:1px;height:16px;background:#ACA899"></div>
<svg style="position:absolute;left:515px;top:300px" width="16" height="18"><path d="M10 8.5 L6 4.5 L6 12.5 Z" fill="#716F64"/></svg>
<div style="left:487px;top:300px;width:8px;height:18px;background:#ECE9D8;border-right:1px solid #716F64;border-bottom:1px solid #716F64;box-sizing:border-box"></div>
<div style="left:488px;top:301px;width:6px;height:16px;border-left:1px solid #fff;border-top:1px solid #fff;box-sizing:border-box"></div>
<div style="left:493px;top:301px;width:1px;height:16px;background:#ACA899"></div>
<div style="left:450.5px;top:300px;width:200px;text-align:center;font-size:11px;line-height:13px;color:#000;white-space:pre;letter-spacing:-0.2px;">23</div>
<div style="left:575px;top:300px;width:25px;height:18px;background:#fff;border:1px solid #7F9DB9;box-sizing:border-box"></div>
<div style="left:487.5px;top:303px;width:200px;text-align:center;font-size:11px;line-height:13px;color:#000;white-space:pre;letter-spacing:0px;">0</div>
<div style="left:388px;top:327px;font-size:11px;line-height:13px;color:#FF0000;white-space:pre;letter-spacing:-0.2px;">Junta 7</div>
<div style="left:453px;top:327px;width:62px;height:18px;background:#E3E3E3;border-top:1px solid #716F64;border-bottom:1px solid #716F64;box-sizing:border-box"></div>
<div style="left:453px;top:328px;width:62px;height:1px;background:#F0F0F0"></div>
<div style="left:437px;top:327px;width:16px;height:18px;background:#ECE9D8;border-right:1px solid #716F64;border-bottom:1px solid #716F64;box-sizing:border-box"></div>
<div style="left:438px;top:328px;width:14px;height:16px;border-left:1px solid #fff;border-top:1px solid #fff;box-sizing:border-box"></div>
<svg style="position:absolute;left:437px;top:327px" width="16" height="18"><path d="M6 8.5 L10 4.5 L10 12.5 Z" fill="#716F64"/></svg>
<div style="left:515px;top:327px;width:16px;height:18px;background:#ECE9D8;border-right:1px solid #716F64;border-bottom:1px solid #716F64;box-sizing:border-box"></div>
<div style="left:516px;top:328px;width:14px;height:16px;border-left:1px solid #fff;border-top:1px solid #fff;box-sizing:border-box"></div>
<div style="left:529px;top:328px;width:1px;height:16px;background:#ACA899"></div>
<svg style="position:absolute;left:515px;top:327px" width="16" height="18"><path d="M10 8.5 L6 4.5 L6 12.5 Z" fill="#716F64"/></svg>
<div style="left:480px;top:327px;width:8px;height:18px;background:#ECE9D8;border-right:1px solid #716F64;border-bottom:1px solid #716F64;box-sizing:border-box"></div>
<div style="left:481px;top:328px;width:6px;height:16px;border-left:1px solid #fff;border-top:1px solid #fff;box-sizing:border-box"></div>
<div style="left:486px;top:328px;width:1px;height:16px;background:#ACA899"></div>
<div style="left:450.5px;top:327px;width:200px;text-align:center;font-size:11px;line-height:13px;color:#000;white-space:pre;letter-spacing:-0.2px;">0</div>
<div style="left:575px;top:327px;width:25px;height:18px;background:#fff;border:1px solid #7F9DB9;box-sizing:border-box"></div>
<div style="left:487.5px;top:330px;width:200px;text-align:center;font-size:11px;line-height:13px;color:#000;white-space:pre;letter-spacing:0px;">0</div>
<div style="left:632px;top:248px;width:227px;height:105px;border:1px solid #fff;box-sizing:border-box"></div>
<div style="left:631px;top:247px;width:227px;height:105px;border:1px solid #808080;box-sizing:border-box"></div>
<div style="left:640px;top:239px;padding:0 2px;background:#ECE9D8;font-size:11px;line-height:13px;color:#0000FF;white-space:pre;letter-spacing:-0.25px">Braço Esquerdo</div>
<div class="btn" style="left:724px;top:251px;width:23px;height:20px"></div>
<div style="left:635.5px;top:255px;width:200px;text-align:center;font-size:11px;line-height:13px;color:#000;white-space:pre;letter-spacing:0px;">0s</div>
<div style="left:638px;top:275px;font-size:11px;line-height:13px;color:#FF0000;white-space:pre;letter-spacing:-0.2px;">Junta 19</div>
<div style="left:703px;top:275px;width:62px;height:18px;background:#E3E3E3;border-top:1px solid #716F64;border-bottom:1px solid #716F64;box-sizing:border-box"></div>
<div style="left:703px;top:276px;width:62px;height:1px;background:#F0F0F0"></div>
<div style="left:687px;top:275px;width:16px;height:18px;background:#ECE9D8;border-right:1px solid #716F64;border-bottom:1px solid #716F64;box-sizing:border-box"></div>
<div style="left:688px;top:276px;width:14px;height:16px;border-left:1px solid #fff;border-top:1px solid #fff;box-sizing:border-box"></div>
<svg style="position:absolute;left:687px;top:275px" width="16" height="18"><path d="M6 8.5 L10 4.5 L10 12.5 Z" fill="#716F64"/></svg>
<div style="left:765px;top:275px;width:16px;height:18px;background:#ECE9D8;border-right:1px solid #716F64;border-bottom:1px solid #716F64;box-sizing:border-box"></div>
<div style="left:766px;top:276px;width:14px;height:16px;border-left:1px solid #fff;border-top:1px solid #fff;box-sizing:border-box"></div>
<div style="left:779px;top:276px;width:1px;height:16px;background:#ACA899"></div>
<svg style="position:absolute;left:765px;top:275px" width="16" height="18"><path d="M10 8.5 L6 4.5 L6 12.5 Z" fill="#716F64"/></svg>
<div style="left:730px;top:275px;width:8px;height:18px;background:#ECE9D8;border-right:1px solid #716F64;border-bottom:1px solid #716F64;box-sizing:border-box"></div>
<div style="left:731px;top:276px;width:6px;height:16px;border-left:1px solid #fff;border-top:1px solid #fff;box-sizing:border-box"></div>
<div style="left:736px;top:276px;width:1px;height:16px;background:#ACA899"></div>
<div style="left:700.5px;top:275px;width:200px;text-align:center;font-size:11px;line-height:13px;color:#000;white-space:pre;letter-spacing:-0.2px;">0</div>
<div style="left:825px;top:275px;width:25px;height:18px;background:#fff;border:1px solid #7F9DB9;box-sizing:border-box"></div>
<div style="left:737.5px;top:278px;width:200px;text-align:center;font-size:11px;line-height:13px;color:#000;white-space:pre;letter-spacing:0px;">0</div>
<div style="left:638px;top:300px;font-size:11px;line-height:13px;color:#FF0000;white-space:pre;letter-spacing:-0.2px;">Junta 20</div>
<div style="left:703px;top:300px;width:62px;height:18px;background:#E3E3E3;border-top:1px solid #716F64;border-bottom:1px solid #716F64;box-sizing:border-box"></div>
<div style="left:703px;top:301px;width:62px;height:1px;background:#F0F0F0"></div>
<div style="left:687px;top:300px;width:16px;height:18px;background:#ECE9D8;border-right:1px solid #716F64;border-bottom:1px solid #716F64;box-sizing:border-box"></div>
<div style="left:688px;top:301px;width:14px;height:16px;border-left:1px solid #fff;border-top:1px solid #fff;box-sizing:border-box"></div>
<svg style="position:absolute;left:687px;top:300px" width="16" height="18"><path d="M6 8.5 L10 4.5 L10 12.5 Z" fill="#716F64"/></svg>
<div style="left:765px;top:300px;width:16px;height:18px;background:#ECE9D8;border-right:1px solid #716F64;border-bottom:1px solid #716F64;box-sizing:border-box"></div>
<div style="left:766px;top:301px;width:14px;height:16px;border-left:1px solid #fff;border-top:1px solid #fff;box-sizing:border-box"></div>
<div style="left:779px;top:301px;width:1px;height:16px;background:#ACA899"></div>
<svg style="position:absolute;left:765px;top:300px" width="16" height="18"><path d="M10 8.5 L6 4.5 L6 12.5 Z" fill="#716F64"/></svg>
<div style="left:730px;top:300px;width:8px;height:18px;background:#ECE9D8;border-right:1px solid #716F64;border-bottom:1px solid #716F64;box-sizing:border-box"></div>
<div style="left:731px;top:301px;width:6px;height:16px;border-left:1px solid #fff;border-top:1px solid #fff;box-sizing:border-box"></div>
<div style="left:736px;top:301px;width:1px;height:16px;background:#ACA899"></div>
<div style="left:700.5px;top:300px;width:200px;text-align:center;font-size:11px;line-height:13px;color:#000;white-space:pre;letter-spacing:-0.2px;">0</div>
<div style="left:825px;top:300px;width:25px;height:18px;background:#fff;border:1px solid #7F9DB9;box-sizing:border-box"></div>
<div style="left:737.5px;top:303px;width:200px;text-align:center;font-size:11px;line-height:13px;color:#000;white-space:pre;letter-spacing:0px;">0</div>
<div style="left:638px;top:325px;font-size:11px;line-height:13px;color:#FF0000;white-space:pre;letter-spacing:-0.2px;">Junta 22</div>
<div style="left:703px;top:325px;width:62px;height:18px;background:#E3E3E3;border-top:1px solid #716F64;border-bottom:1px solid #716F64;box-sizing:border-box"></div>
<div style="left:703px;top:326px;width:62px;height:1px;background:#F0F0F0"></div>
<div style="left:687px;top:325px;width:16px;height:18px;background:#ECE9D8;border-right:1px solid #716F64;border-bottom:1px solid #716F64;box-sizing:border-box"></div>
<div style="left:688px;top:326px;width:14px;height:16px;border-left:1px solid #fff;border-top:1px solid #fff;box-sizing:border-box"></div>
<svg style="position:absolute;left:687px;top:325px" width="16" height="18"><path d="M6 8.5 L10 4.5 L10 12.5 Z" fill="#716F64"/></svg>
<div style="left:765px;top:325px;width:16px;height:18px;background:#ECE9D8;border-right:1px solid #716F64;border-bottom:1px solid #716F64;box-sizing:border-box"></div>
<div style="left:766px;top:326px;width:14px;height:16px;border-left:1px solid #fff;border-top:1px solid #fff;box-sizing:border-box"></div>
<div style="left:779px;top:326px;width:1px;height:16px;background:#ACA899"></div>
<svg style="position:absolute;left:765px;top:325px" width="16" height="18"><path d="M10 8.5 L6 4.5 L6 12.5 Z" fill="#716F64"/></svg>
<div style="left:730px;top:325px;width:8px;height:18px;background:#ECE9D8;border-right:1px solid #716F64;border-bottom:1px solid #716F64;box-sizing:border-box"></div>
<div style="left:731px;top:326px;width:6px;height:16px;border-left:1px solid #fff;border-top:1px solid #fff;box-sizing:border-box"></div>
<div style="left:736px;top:326px;width:1px;height:16px;background:#ACA899"></div>
<div style="left:700.5px;top:325px;width:200px;text-align:center;font-size:11px;line-height:13px;color:#000;white-space:pre;letter-spacing:-0.2px;">0</div>
<div style="left:825px;top:325px;width:25px;height:18px;background:#fff;border:1px solid #7F9DB9;box-sizing:border-box"></div>
<div style="left:737.5px;top:328px;width:200px;text-align:center;font-size:11px;line-height:13px;color:#000;white-space:pre;letter-spacing:0px;">0</div>
<div style="left:882px;top:248px;width:227px;height:105px;border:1px solid #fff;box-sizing:border-box"></div>
<div style="left:881px;top:247px;width:227px;height:105px;border:1px solid #808080;box-sizing:border-box"></div>
<div style="left:890px;top:239px;padding:0 2px;background:#ECE9D8;font-size:11px;line-height:13px;color:#0000FF;white-space:pre;letter-spacing:-0.25px">Cabeça</div>
<div class="btn" style="left:974px;top:252px;width:23px;height:20px"></div>
<div style="left:885.5px;top:256px;width:200px;text-align:center;font-size:11px;line-height:13px;color:#000;white-space:pre;letter-spacing:0px;">0s</div>
<div style="left:888px;top:283px;font-size:11px;line-height:13px;color:#FF0000;white-space:pre;letter-spacing:-0.2px;">Junta 15</div>
<div style="left:953px;top:283px;width:62px;height:18px;background:#E3E3E3;border-top:1px solid #716F64;border-bottom:1px solid #716F64;box-sizing:border-box"></div>
<div style="left:953px;top:284px;width:62px;height:1px;background:#F0F0F0"></div>
<div style="left:937px;top:283px;width:16px;height:18px;background:#ECE9D8;border-right:1px solid #716F64;border-bottom:1px solid #716F64;box-sizing:border-box"></div>
<div style="left:938px;top:284px;width:14px;height:16px;border-left:1px solid #fff;border-top:1px solid #fff;box-sizing:border-box"></div>
<svg style="position:absolute;left:937px;top:283px" width="16" height="18"><path d="M6 8.5 L10 4.5 L10 12.5 Z" fill="#716F64"/></svg>
<div style="left:1015px;top:283px;width:16px;height:18px;background:#ECE9D8;border-right:1px solid #716F64;border-bottom:1px solid #716F64;box-sizing:border-box"></div>
<div style="left:1016px;top:284px;width:14px;height:16px;border-left:1px solid #fff;border-top:1px solid #fff;box-sizing:border-box"></div>
<div style="left:1029px;top:284px;width:1px;height:16px;background:#ACA899"></div>
<svg style="position:absolute;left:1015px;top:283px" width="16" height="18"><path d="M10 8.5 L6 4.5 L6 12.5 Z" fill="#716F64"/></svg>
<div style="left:980px;top:283px;width:8px;height:18px;background:#ECE9D8;border-right:1px solid #716F64;border-bottom:1px solid #716F64;box-sizing:border-box"></div>
<div style="left:981px;top:284px;width:6px;height:16px;border-left:1px solid #fff;border-top:1px solid #fff;box-sizing:border-box"></div>
<div style="left:986px;top:284px;width:1px;height:16px;background:#ACA899"></div>
<div style="left:950.5px;top:283px;width:200px;text-align:center;font-size:11px;line-height:13px;color:#000;white-space:pre;letter-spacing:-0.2px;">0</div>
<div style="left:1075px;top:283px;width:25px;height:18px;background:#fff;border:1px solid #7F9DB9;box-sizing:border-box"></div>
<div style="left:987.5px;top:286px;width:200px;text-align:center;font-size:11px;line-height:13px;color:#000;white-space:pre;letter-spacing:0px;">0</div>
<div style="left:888px;top:309px;font-size:11px;line-height:13px;color:#FF0000;white-space:pre;letter-spacing:-0.2px;">Junta 16</div>
<div style="left:953px;top:309px;width:62px;height:18px;background:#E3E3E3;border-top:1px solid #716F64;border-bottom:1px solid #716F64;box-sizing:border-box"></div>
<div style="left:953px;top:310px;width:62px;height:1px;background:#F0F0F0"></div>
<div style="left:937px;top:309px;width:16px;height:18px;background:#ECE9D8;border-right:1px solid #716F64;border-bottom:1px solid #716F64;box-sizing:border-box"></div>
<div style="left:938px;top:310px;width:14px;height:16px;border-left:1px solid #fff;border-top:1px solid #fff;box-sizing:border-box"></div>
<svg style="position:absolute;left:937px;top:309px" width="16" height="18"><path d="M6 8.5 L10 4.5 L10 12.5 Z" fill="#716F64"/></svg>
<div style="left:1015px;top:309px;width:16px;height:18px;background:#ECE9D8;border-right:1px solid #716F64;border-bottom:1px solid #716F64;box-sizing:border-box"></div>
<div style="left:1016px;top:310px;width:14px;height:16px;border-left:1px solid #fff;border-top:1px solid #fff;box-sizing:border-box"></div>
<div style="left:1029px;top:310px;width:1px;height:16px;background:#ACA899"></div>
<svg style="position:absolute;left:1015px;top:309px" width="16" height="18"><path d="M10 8.5 L6 4.5 L6 12.5 Z" fill="#716F64"/></svg>
<div style="left:980px;top:309px;width:8px;height:18px;background:#ECE9D8;border-right:1px solid #716F64;border-bottom:1px solid #716F64;box-sizing:border-box"></div>
<div style="left:981px;top:310px;width:6px;height:16px;border-left:1px solid #fff;border-top:1px solid #fff;box-sizing:border-box"></div>
<div style="left:986px;top:310px;width:1px;height:16px;background:#ACA899"></div>
<div style="left:950.5px;top:309px;width:200px;text-align:center;font-size:11px;line-height:13px;color:#000;white-space:pre;letter-spacing:-0.2px;">0</div>
<div style="left:1075px;top:309px;width:25px;height:18px;background:#fff;border:1px solid #7F9DB9;box-sizing:border-box"></div>
<div style="left:987.5px;top:312px;width:200px;text-align:center;font-size:11px;line-height:13px;color:#000;white-space:pre;letter-spacing:0px;">0</div>
<div style="left:1130px;top:84px;width:121px;height:281px;border:1px solid #fff;box-sizing:border-box"></div>
<div style="left:1129px;top:83px;width:121px;height:281px;border:1px solid #808080;box-sizing:border-box"></div>
<div style="left:1174px;top:74px;padding:0 2px;background:#ECE9D8;font-size:13px;line-height:16px;color:#000;white-space:pre;letter-spacing:0.3px">Fase</div>
<div class="btn" style="left:1138px;top:109px;width:18px;height:24px"></div>
<div style="left:1047.0px;top:115px;width:200px;text-align:center;font-size:13px;line-height:16px;color:#000;white-space:pre;letter-spacing:0px;font-weight:bold">«</div>
<div class="btn" style="left:1159px;top:109px;width:18px;height:24px"></div>
<div style="left:1068.0px;top:114px;width:200px;text-align:center;font-size:15px;line-height:18px;color:#000;white-space:pre;letter-spacing:0px;font-weight:bold"><</div>
<div class="btn" style="left:1201px;top:109px;width:18px;height:24px"></div>
<div style="left:1110.0px;top:114px;width:200px;text-align:center;font-size:15px;line-height:18px;color:#000;white-space:pre;letter-spacing:0px;font-weight:bold">></div>
<div class="btn" style="left:1222px;top:109px;width:18px;height:24px"></div>
<div style="left:1131.0px;top:115px;width:200px;text-align:center;font-size:13px;line-height:16px;color:#000;white-space:pre;letter-spacing:0px;font-weight:bold">»</div>
<div style="left:1089px;top:112px;width:200px;text-align:center;font-size:16px;line-height:19px;color:#333;white-space:pre;letter-spacing:0px;">4</div>
<div style="left:1148px;top:149px;font-size:11px;line-height:13px;color:#000;white-space:pre;letter-spacing:-0.2px;">Duraçao</div>
<div style="left:1196px;top:146px;width:35px;height:21px;background:#fff;border:1px solid #7F9DB9;box-sizing:border-box"></div>
<div style="left:1113.5px;top:149px;width:200px;text-align:center;font-size:13px;line-height:16px;color:#000;white-space:pre;letter-spacing:0px;">1</div>
<div style="left:1152px;top:194px;font-size:14px;line-height:17px;color:#000;white-space:pre;letter-spacing:0px;">Pe</div>
<div class="radio on" style="left:1182px;top:183px"></div>
<div class="radio" style="left:1182px;top:207px"></div>
<div style="left:1198px;top:183px;font-size:11px;line-height:13px;color:#000;white-space:pre;letter-spacing:-0.2px;">DIR</div>
<div style="left:1198px;top:207px;font-size:11px;line-height:13px;color:#000;white-space:pre;letter-spacing:-0.2px;">ESQ</div>
<div class="btn" style="left:1151px;top:240px;width:79px;height:24px"></div>
<div style="left:1090.5px;top:246px;width:200px;text-align:center;font-size:11px;line-height:13px;color:#000;white-space:pre;letter-spacing:0px;">Inserir Fase</div>
<div class="btn" style="left:1151px;top:270px;width:79px;height:24px"></div>
<div style="left:1090.5px;top:276px;width:200px;text-align:center;font-size:11px;line-height:13px;color:#000;white-space:pre;letter-spacing:0px;">Copiar Fase</div>
<div class="btn" style="left:1151px;top:300px;width:79px;height:25px"></div>
<div style="left:1090.5px;top:306px;width:200px;text-align:center;font-size:11px;line-height:13px;color:#000;white-space:pre;letter-spacing:0px;">Colar Fase</div>
<div class="btn" style="left:1151px;top:331px;width:79px;height:24px"></div>
<div style="left:1090.5px;top:337px;width:200px;text-align:center;font-size:11px;line-height:13px;color:#000;white-space:pre;letter-spacing:0px;">Remover Fase</div>
<div style="left:36px;top:411px;width:200px;text-align:center;font-size:11px;line-height:13px;color:#FF8000;white-space:pre;letter-spacing:-0.2px;">Andar</div>
<div style="left:170px;top:411px;width:50px;height:20px;background:#C0C0C0"></div>
<div style="left:95.0px;top:411px;width:200px;text-align:center;font-size:11px;line-height:13px;color:#0000FF;white-space:pre;letter-spacing:-0.2px;">Rodar</div>
<div style="left:221px;top:411px;width:65px;height:20px;background:#C0C0C0"></div>
<div style="left:153.5px;top:411px;width:200px;text-align:center;font-size:11px;line-height:13px;color:#0000FF;white-space:pre;letter-spacing:-0.2px;">Escadas</div>
<div style="left:287px;top:411px;width:50px;height:20px;background:#C0C0C0"></div>
<div style="left:212.0px;top:411px;width:200px;text-align:center;font-size:11px;line-height:13px;color:#0000FF;white-space:pre;letter-spacing:-0.2px;">Chutar</div>
<div style="left:338px;top:411px;width:65px;height:20px;background:#C0C0C0"></div>
<div style="left:270.5px;top:411px;width:200px;text-align:center;font-size:11px;line-height:13px;color:#0000FF;white-space:pre;letter-spacing:-0.2px;">Outros</div>
<div style="left:105px;top:436px;width:300px;height:341px;border:1px solid #fff;box-sizing:border-box"></div>
<div style="left:104px;top:435px;width:300px;height:341px;border:1px solid #808080;box-sizing:border-box"></div>
<div style="left:113px;top:435px;width:4px;height:2px;background:#ECE9D8"></div>
<div style="left:119px;top:480px;font-size:11px;line-height:13px;color:#0000FF;white-space:pre;letter-spacing:0px;">Numero de Passos</div>
<div style="left:322px;top:479px;width:67px;height:21px;background:#fff;border:1px solid #7F9DB9;box-sizing:border-box"></div>
<div style="left:255.5px;top:483px;width:200px;text-align:center;font-size:11px;line-height:13px;color:#000;white-space:pre;letter-spacing:0px;">1</div>
<div style="left:108px;top:547px;width:292px;height:146px;border:1px solid #fff;box-sizing:border-box"></div>
<div style="left:107px;top:546px;width:292px;height:146px;border:1px solid #808080;box-sizing:border-box"></div>
<div style="left:116px;top:538px;padding:0 2px;background:#ECE9D8;font-size:11px;line-height:13px;color:#000;white-space:pre;">Definiçao do passo</div>
<div style="left:122px;top:567px;font-size:11px;line-height:13px;color:#0000FF;white-space:pre;letter-spacing:-0.2px;">Comprimento do Passo</div>
<div style="left:322px;top:569px;width:69px;height:21px;background:#fff;border:1px solid #7F9DB9;box-sizing:border-box"></div>
<div style="left:256.5px;top:573px;width:200px;text-align:center;font-size:11px;line-height:13px;color:#000;white-space:pre;letter-spacing:0px;">0.1</div>
<div style="left:122px;top:597px;font-size:11px;line-height:13px;color:#0000FF;white-space:pre;letter-spacing:0.2px;">Altura da Anca</div>
<div style="left:322px;top:598px;width:69px;height:21px;background:#fff;border:1px solid #7F9DB9;box-sizing:border-box"></div>
<div style="left:256.5px;top:602px;width:200px;text-align:center;font-size:11px;line-height:13px;color:#000;white-space:pre;letter-spacing:0px;">0.34</div>
<div style="left:122px;top:626px;font-size:11px;line-height:13px;color:#0000FF;white-space:pre;letter-spacing:0px;">Max Elevaçao do pe</div>
<div style="left:322px;top:627px;width:69px;height:21px;background:#fff;border:1px solid #7F9DB9;box-sizing:border-box"></div>
<div style="left:256.5px;top:631px;width:200px;text-align:center;font-size:11px;line-height:13px;color:#000;white-space:pre;letter-spacing:0px;">0.02</div>
<div style="left:122px;top:655px;font-size:11px;line-height:13px;color:#0000FF;white-space:pre;letter-spacing:0px;">Posiçao lateral do centro da anca</div>
<div style="left:322px;top:656px;width:69px;height:21px;background:#fff;border:1px solid #7F9DB9;box-sizing:border-box"></div>
<div style="left:256.5px;top:660px;width:200px;text-align:center;font-size:11px;line-height:13px;color:#000;white-space:pre;letter-spacing:0px;">-0.02</div>
<div class="btn" style="left:123px;top:710px;width:82px;height:24px"></div>
<div style="left:64.0px;top:716px;width:200px;text-align:center;font-size:11px;line-height:13px;color:#000;white-space:pre;letter-spacing:0px;">Adicionar</div>
<div class="btn" style="left:291px;top:709px;width:98px;height:24px"></div>
<div style="left:240.0px;top:715px;width:200px;text-align:center;font-size:11px;line-height:13px;color:#000;white-space:pre;letter-spacing:0px;">Valores por Defeito</div>
<div style="left:426px;top:435px;width:264px;height:343px;border:1px solid #fff;box-sizing:border-box"></div>
<div style="left:425px;top:434px;width:264px;height:343px;border:1px solid #808080;box-sizing:border-box"></div>
<div style="left:435px;top:426px;padding:0 2px;background:#ECE9D8;font-size:11px;line-height:13px;color:#000;white-space:pre;">Gestao do plot</div>
<div class="cb" style="left:446px;top:464px"></div>
<svg style="position:absolute;left:446px;top:464px" width="13" height="13"><path d="M3 6.2 L5.5 8.7 L10 3.8" stroke="#21A121" stroke-width="2.4" fill="none"/></svg>
<div style="left:462px;top:464px;font-size:11px;line-height:13px;color:#0000FF;white-space:pre;letter-spacing:0px;">Tapete</div>
<div class="cb" style="left:504px;top:463px"></div>
<div style="left:520px;top:463px;font-size:11px;line-height:13px;color:#0000FF;white-space:pre;letter-spacing:0px;">Escadas</div>
<div class="cb" style="left:571px;top:464px"></div>
<div style="left:588px;top:464px;font-size:11px;line-height:13px;color:#0000FF;white-space:pre;letter-spacing:-0.2px;">Bola</div>
<div class="cb" style="left:628px;top:464px"></div>
<div style="left:644px;top:464px;font-size:11px;line-height:13px;color:#0000FF;white-space:pre;letter-spacing:-0.2px;">CoG</div>
<div style="left:362px;top:498px;width:200px;text-align:center;font-size:11px;line-height:13px;color:#FF8000;white-space:pre;letter-spacing:-0.2px;">Tapete</div>
<div style="left:496px;top:498px;width:65px;height:20px;background:#C0C0C0"></div>
<div style="left:428.5px;top:498px;width:200px;text-align:center;font-size:11px;line-height:13px;color:#0000FF;white-space:pre;letter-spacing:-0.2px;">Escadas</div>
<div style="left:562px;top:498px;width:65px;height:20px;background:#C0C0C0"></div>
<div style="left:494.5px;top:498px;width:200px;text-align:center;font-size:11px;line-height:13px;color:#0000FF;white-space:pre;letter-spacing:-0.2px;">Bola</div>
<div style="left:430px;top:522px;width:255px;height:245px;border:1px solid #fff;box-sizing:border-box"></div>
<div style="left:429px;top:521px;width:255px;height:245px;border:1px solid #808080;box-sizing:border-box"></div>
<div style="left:438px;top:521px;width:4px;height:2px;background:#ECE9D8"></div>
<div style="left:438px;top:548px;width:232px;height:69px;border:1px solid #fff;box-sizing:border-box"></div>
<div style="left:437px;top:547px;width:232px;height:69px;border:1px solid #808080;box-sizing:border-box"></div>
<div style="left:446px;top:539px;padding:0 2px;background:#ECE9D8;font-size:11px;line-height:13px;color:#000;white-space:pre;">Dimensoes</div>
<div style="left:463px;top:561px;font-size:11px;line-height:13px;color:#0000FF;white-space:pre;letter-spacing:-0.2px;">Comprimento</div>
<div style="left:581px;top:557px;width:51px;height:21px;background:#fff;border:1px solid #7F9DB9;box-sizing:border-box"></div>
<div style="left:506.5px;top:561px;width:200px;text-align:center;font-size:11px;line-height:13px;color:#000;white-space:pre;letter-spacing:0px;">1.6</div>
<div style="left:463px;top:585px;font-size:11px;line-height:13px;color:#0000FF;white-space:pre;letter-spacing:0.1px;">Largura</div>
<div style="left:582px;top:585px;width:50px;height:21px;background:#fff;border:1px solid #7F9DB9;box-sizing:border-box"></div>
<div style="left:507.0px;top:589px;width:200px;text-align:center;font-size:11px;line-height:13px;color:#000;white-space:pre;letter-spacing:0px;">0.8</div>
<div style="left:439px;top:639px;width:232px;height:69px;border:1px solid #fff;box-sizing:border-box"></div>
<div style="left:438px;top:638px;width:232px;height:69px;border:1px solid #808080;box-sizing:border-box"></div>
<div style="left:447px;top:631px;padding:0 2px;background:#ECE9D8;font-size:11px;line-height:13px;color:#000;white-space:pre;">Posiçao</div>
<div style="left:464px;top:653px;font-size:11px;line-height:13px;color:#0000FF;white-space:pre;letter-spacing:-0.2px;">x</div>
<div style="left:582px;top:648px;width:51px;height:21px;background:#fff;border:1px solid #7F9DB9;box-sizing:border-box"></div>
<div style="left:507.5px;top:652px;width:200px;text-align:center;font-size:11px;line-height:13px;color:#000;white-space:pre;letter-spacing:0px;">0</div>
<div style="left:464px;top:677px;font-size:11px;line-height:13px;color:#0000FF;white-space:pre;letter-spacing:-0.2px;">y</div>
<div style="left:583px;top:676px;width:51px;height:21px;background:#fff;border:1px solid #7F9DB9;box-sizing:border-box"></div>
<div style="left:508.5px;top:680px;width:200px;text-align:center;font-size:11px;line-height:13px;color:#000;white-space:pre;letter-spacing:0px;">0</div>
<div class="btn" style="left:703px;top:414px;width:87px;height:27px"></div>
<div style="left:646.5px;top:421px;width:200px;text-align:center;font-size:11px;line-height:13px;color:#000;white-space:pre;letter-spacing:0px;">Rodar</div>
<div class="btn" style="left:703px;top:465px;width:87px;height:27px"></div>
<div style="left:646.5px;top:472px;width:200px;text-align:center;font-size:11px;line-height:13px;color:#000;white-space:pre;letter-spacing:0px;">Simular</div>
<svg style="position:absolute;left:0;top:0" width="1376" height="828">
<polygon points="810.5,709.4 1115.6,591.3 1238.8,666.5 925,799.8" fill="#00FFFF" stroke="#000" stroke-width="1"/>
<g stroke="#000" stroke-width="1" stroke-linejoin="miter">
<polygon points="1004.6,694.8 1042.6,681.3 1055.7,685.0 1018.3,700.2" fill="#FFFF00"/>
<polygon points="1004.6,692.2 1042.6,678.7 1055.7,682.4 1018.3,697.6" fill="#FFFF00"/>
<polygon points="988.3,679.1 1013.3,671.3 1031.7,673.0 1025.2,678.5 1001.3,687.8" fill="#FFFF00"/>
<polygon points="988.3,676.5 1013.3,668.7 1031.7,670.4 1025.2,675.9 1001.3,685.2" fill="#FFFF00"/>
<polygon points="1011.1,635.7 1018.3,628.0 1027.4,635.7 1025.2,645.4 1014.3,643.3" fill="#FFFF00"/>
<polygon points="1004.6,655.2 1014.3,642.2 1025.2,647.6 1019.8,661.7" fill="#FFFF00"/>
<polygon points="1023.0,644.3 1031.7,640.0 1039.3,648.7 1036.1,661.7 1025.2,668.3 1019.8,661.7" fill="#FFFF00"/>
<polygon points="1017.6,668.3 1029.6,657.4 1040.4,661.7 1035.0,673.7 1023.0,677.0" fill="#FFFF00"/>
<polygon points="1037.2,655.2 1053.5,652.0 1055.7,663.9 1045.9,670.4 1040.4,667.2" fill="#FFFF00"/>
<polygon points="1031.7,679.1 1051.3,665.0 1054.6,670.4 1047.0,679.1 1036.1,683.5" fill="#FFFF00"/>
<polygon points="1025.2,628.0 1035.0,627.0 1042.6,633.5 1040.4,642.2 1031.7,638.9" fill="#FFFF00"/>
</g>
<polygon points="1017.6,627.0 1025.2,625.9 1035.0,642.2 1029.6,644.3" fill="#000"/>
<polygon points="1031.7,638.9 1038.3,635.7 1049.1,657.4 1043.7,660.7" fill="#000"/>
<polygon points="1007.8,657.4 1013.3,654.1 1018.7,666.1 1013.3,668.3" fill="#000"/>
<polygon points="1006.7,670.4 1016.5,667.2 1019.8,673.7 1010.0,675.9" fill="#000"/>
<polygon points="1020.9,670.4 1031.7,668.3 1038.3,679.1 1027.4,681.3" fill="#000"/>
<polygon points="1029.6,681.3 1036.1,679.1 1039.3,684.6 1032.8,686.7" fill="#000"/>
<polygon points="1038.3,659.6 1051.3,661.7 1049.1,668.3 1040.4,667.2" fill="#000"/>
<polygon points="1018.7,633.5 1025.2,631.3 1027.4,640.0 1022.0,642.2" fill="#000"/>
<path d="M1027.4 633.5 L1026.3 642.2 M1041.5 640.0 L1043.7 653.0 M1025.2 657.4 L1017.6 668.3 M1038.3 660.7 L1031.7 672.6 M1015.4 672.6 L1015.4 675.9 M1027.4 679.1 L1028.5 683.5" stroke="#0000FF" stroke-width="1.5" fill="none"/>
<polygon points="1027.0,602.0 1032.8,603.0 1032.8,621.5 1027.0,620.4" fill="#000"/>
<polygon points="1040.0,612.8 1045.2,613.9 1045.2,632.4 1040.0,631.3" fill="#000"/>
<g stroke="#000" stroke-width="1" stroke-linejoin="miter">
<polygon points="1014.3,612.8 1017.0,611.7 1057.8,625.9 1057.8,631.3 1043.7,637.8 1014.3,620.9" fill="#FFFF00"/>
<path d="M1017.0 615.0 L1043.7 630.2 M1043.7 630.2 L1057.8 625.9 M1043.7 630.2 L1043.7 637.8" fill="none"/>
</g>
<polygon points="1040.0,624.8 1045.2,625.9 1045.2,633.5 1040.0,632.4" fill="#000"/>
<g stroke="#000" stroke-width="1.2" stroke-linejoin="miter">
<polygon points="1012.2,570.4 1023.0,567.8 1058.9,588.9 1059.6,620.0 1053.5,622.6 1049.1,620.4 1047.0,615.0 1017.6,599.8 1012.2,597.6" fill="#FFFF00"/>
<polygon points="1027.8,583.0 1047.0,593.5 1047.0,601.3 1027.8,591.3" fill="#ECE9D8"/>
<path d="M1014.3 572.6 L1048.0 591.7 M1048.0 591.7 L1058.9 588.9 M1015.4 595.4 L1027.8 591.3 M1027.8 591.3 L1047.0 601.3 M1014.3 572.6 L1015.4 595.4 M1027.8 583.0 L1027.8 591.3 M1048.0 591.7 L1048.0 616.1 M1052.4 593.3 L1052.4 621.5 M1058.9 591.1 L1052.4 593.3" fill="none"/>
</g>
<polygon points="1049.1,592.2 1056.7,591.1 1057.8,596.1 1051.3,597.0" fill="#000"/>
<circle cx="1036.5" cy="565.1" r="6.4" fill="#000"/>
<path d="M1036.1 572.6 L1036.1 580.2 M1033.9 602.0 L1037.2 602.0 M1035.0 609.6 L1035.7 615.0 M1051.3 593.3 L1053.9 593.3" stroke="#0000FF" stroke-width="2.5" fill="none"/>
</svg></body></html>
